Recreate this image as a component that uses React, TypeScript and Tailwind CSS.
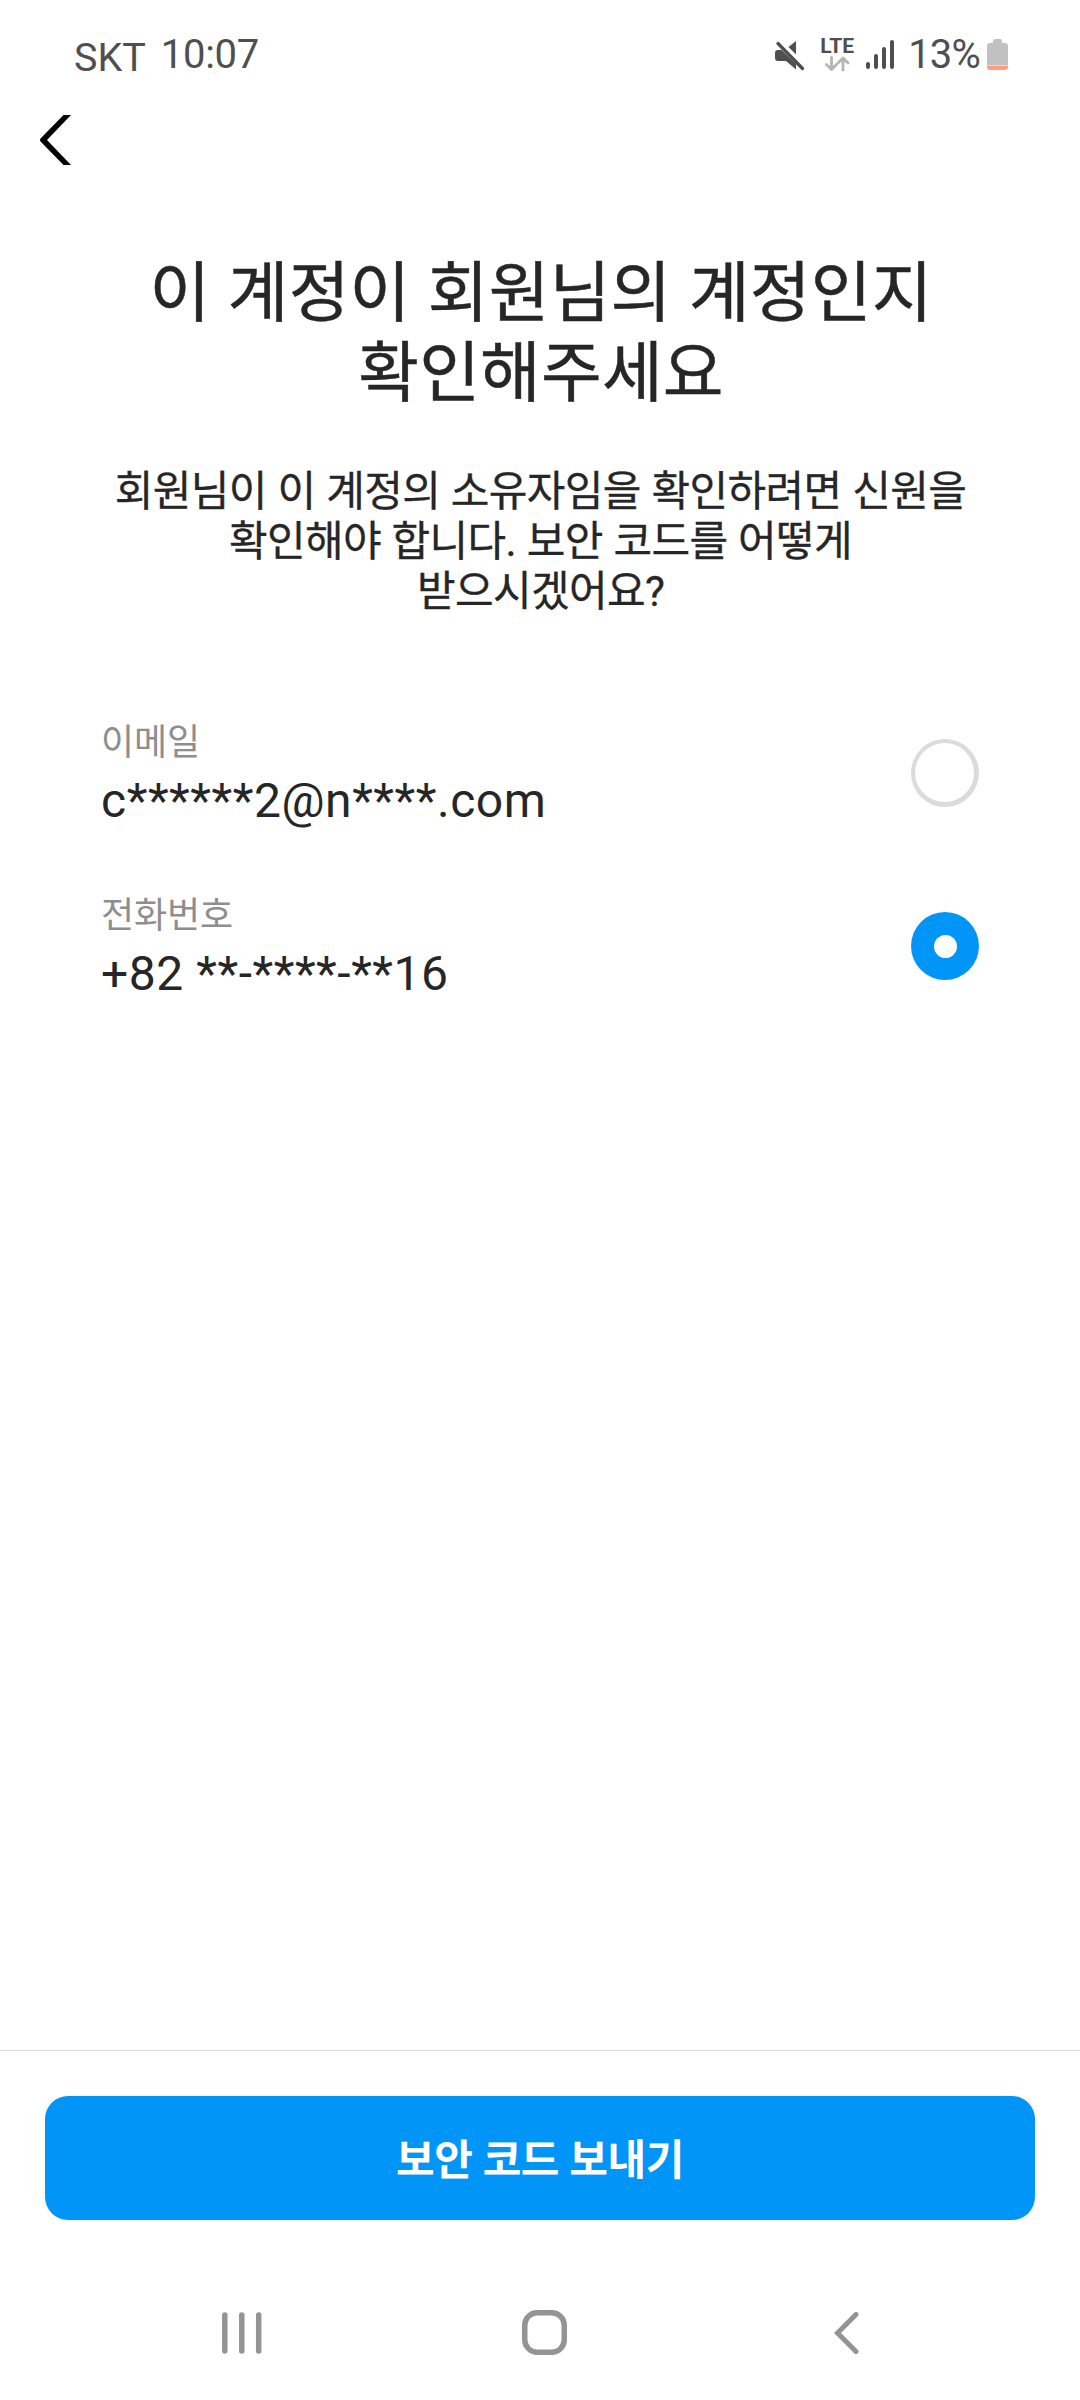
import { useState } from 'react';

interface Contact {
  id: string;
  label: string;
  value: string;
}

const contacts: Contact[] = [
  { id: 'email', label: '이메일', value: 'c******2@n****.com' },
  { id: 'phone', label: '전화번호', value: '+82 **-****-**16' },
];

function StatusBar() {
  return (
    <div className="h-[110px] pt-[31px] pl-[74px] pr-[72px] flex items-start justify-between text-[40px] leading-[48px] text-[#4f4f4f]">
      <div className="flex">
        <span className="text-[39.5px] pt-[3px]">SKT</span>
        <span className="ml-[15px] tracking-[-0.3px]">10:07</span>
      </div>
      <div className="flex">
        {/* muted speaker */}
        <svg className="w-[30px] h-[30px] mt-[10px] mr-[15px]" viewBox="0 0 30 30">
          <path d="M3 9h3.500L21 23v5.500L11 20H3Q0 20 0 17v-5Q0 9 3 9z" fill="#4f4f4f" />
          <path d="M21 0v13.500L13.500 6z" fill="#4f4f4f" />
          <path d="M3 2.500l24.500 25" stroke="#4f4f4f" strokeWidth="3.300" strokeLinecap="round" />
        </svg>
        <div className="w-[34px] mr-[12px] pt-[5px] flex flex-col items-center">
          <span className="text-[21px] leading-[20px] font-bold">LTE</span>
          <svg className="w-[26px] h-[16px]" viewBox="0 0 26 16" fill="none" stroke="#b5b5b5" strokeWidth="2.800" strokeLinecap="round" strokeLinejoin="round">
            <path d="M7.500 1.500v12M2.500 8.500l5 5 5-5M19 14V2M14 7l5-5 5 5" />
          </svg>
        </div>
        <div className="flex items-end gap-[4px] h-[38px]">
          <i className="w-[4px] h-[7px] rounded-full bg-[#4f4f4f]" />
          <i className="w-[4px] h-[15px] rounded-full bg-[#4f4f4f]" />
          <i className="w-[4px] h-[22px] rounded-full bg-[#4f4f4f]" />
          <i className="w-[4px] h-[29px] rounded-full bg-[#4f4f4f]" />
        </div>
        <span className="ml-[14px] tracking-[-0.8px]">13%</span>
        <svg className="w-[21px] h-[32px] mt-[8px] ml-[7px]" viewBox="0 0 21 32">
          <path d="M6 2Q6 0 8 0h5q2 0 2 2v2h3q3 0 3 3v19H0V7q0-3 3-3h3z" fill="#c1c1c1" />
          <path d="M0 26.500h21V28q0 3-3 3H3q-3 0-3-3z" fill="#ff9d80" />
        </svg>
      </div>
    </div>
  );
}

function Radio({ checked }: { checked: boolean }) {
  if (checked) {
    return (
      <span className="w-[68px] h-[68px] rounded-full bg-[#0095f6] flex items-center justify-center">
        <span className="w-[23px] h-[23px] rounded-full bg-white" />
      </span>
    );
  }
  return <span className="block w-[68px] h-[68px] rounded-full border-t-4 border-l-4 border-r-[5px] border-b-[5px] border-[#dbdbdb]" />;
}

export default function App() {
  const [selected, setSelected] = useState('phone');

  return (
    <div className="w-[1080px] h-[2400px] bg-white flex flex-col text-[#262626] font-['Roboto','Noto_Sans_CJK_KR',sans-serif]">
      <StatusBar />

      <button className="w-[80px] h-[60px] pl-[40px] pt-[5px] flex items-start">
        <svg className="w-[31px] h-[50px]" viewBox="0 0 31 50">
          <path d="M0.800 23.300L23.500 0H31L7 25l24 25h-7.500L0.800 26.700Q-0.800 25 0.800 23.300z" fill="#000" />
        </svg>
      </button>

      <main className="flex-1 pt-[84px]">
        <h1 className="pl-[2px] text-[66px] leading-[80px] text-center tracking-[0.2px] [word-spacing:0.8px] [-webkit-text-stroke:0.5px_#262626]">
          이 계정이 회원님의 계정인지
          <br />
          확인해주세요
        </h1>
        <p className="mt-[53px] pl-[1px] text-[42px] leading-[50px] text-center tracking-[-0.64px] [word-spacing:0.9px] [-webkit-text-stroke:0.3px_#262626]">
          회원님이 이 계정의 소유자임을 확인하려면 신원을
          <br />
          확인해야 합니다. 보안 코드를 어떻게
          <br />
          받으시겠어요?
        </p>

        <div className="mt-[105px] px-[101px] flex flex-col gap-[64px]">
          {contacts.map((c) => (
            <button key={c.id} onClick={() => setSelected(c.id)} className="h-[109px] flex items-start justify-between text-left">
              <span className="flex flex-col">
                <span className="text-[36px] leading-[42px] tracking-[-0.12px] text-[#8e8e8e]">{c.label}</span>
                <span className="mt-[9px] text-[48px] leading-[56px] tracking-[0.54px]">{c.value}</span>
              </span>
              <span className="mt-[17px]">
                <Radio checked={selected === c.id} />
              </span>
            </button>
          ))}
        </div>
      </main>

      <footer className="h-[350px] border-t border-[#dbdbdb] px-[45px] pt-[45px]">
        <button className="w-full h-[124px] pt-[5px] rounded-[23px] bg-[#0095f6] text-white text-[42px] leading-[50px] tracking-[-0.4px] font-bold">
          보안 코드 보내기
        </button>
        <div className="mt-[90px] h-[45px] pl-[177px] flex items-center">
          <svg className="w-[40px] h-[42px]" viewBox="0 0 40 42" stroke="#949494" strokeWidth="5.500" strokeLinecap="round">
            <path d="M2.800 3v36M19.800 3v36M36.700 3v36" />
          </svg>
          <svg className="ml-[260px] w-[45px] h-[45px]" viewBox="0 0 45 45" fill="none" stroke="#949494" strokeWidth="5.500">
            <rect x="2.750" y="2.750" width="39.500" height="39.500" rx="12.500" />
          </svg>
          <svg className="ml-[267px] w-[25px] h-[42px]" viewBox="0 0 25 42" fill="none" stroke="#949494" strokeWidth="5" strokeLinecap="round">
            <path d="M22 2.500L3.500 21 22 39.500" />
          </svg>
        </div>
      </footer>
    </div>
  );
}
